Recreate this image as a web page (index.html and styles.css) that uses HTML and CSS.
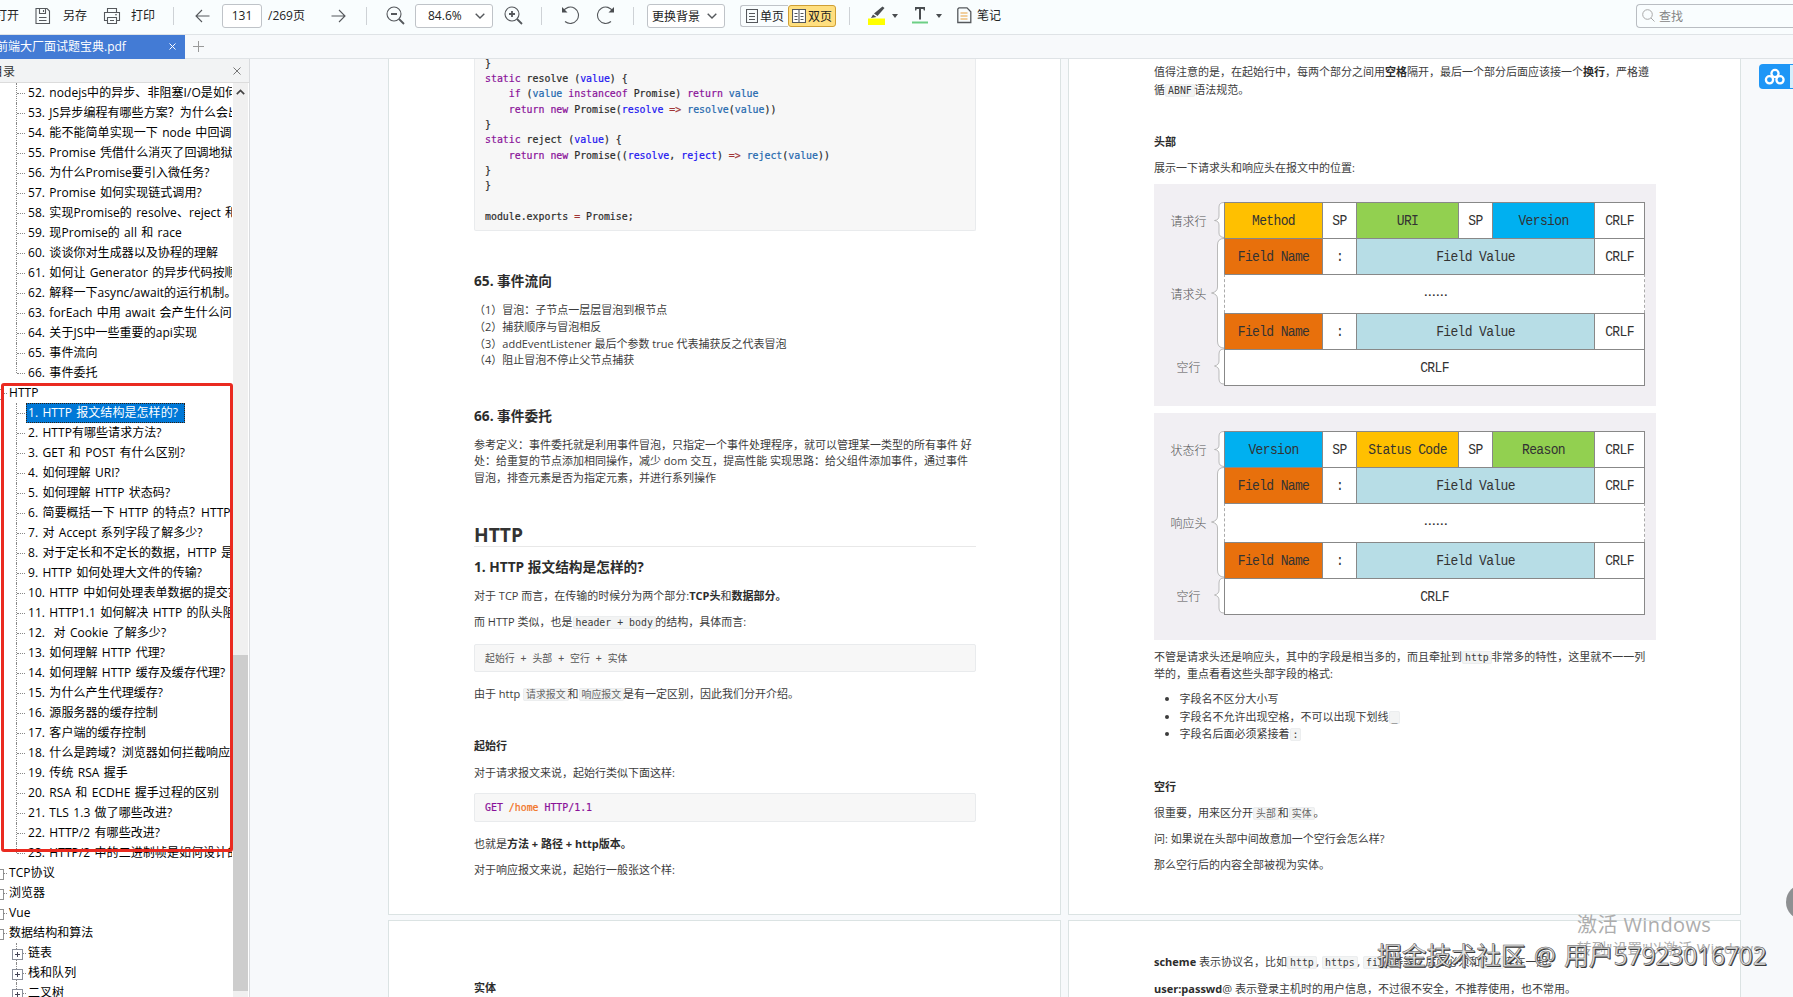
FILE: index.html
```html
<!DOCTYPE html>
<html lang="zh-CN">
<head>
<meta charset="utf-8">
<title>前端大厂面试题宝典.pdf</title>
<link rel="stylesheet" href="styles.css">
</head>
<body>
<div class="app">
  <header class="toolbar">
    <span class="tool t-open">打开</span>
    <svg class="ic i-save" width="16" height="18" viewBox="0 0 16 18"><path d="M1 1.5h11l2.5 2.5v12.500h-13.500zM4.500 1.500v5h6v-5M8.500 3v2M4 10.500h7.500M4 13.500h7.500"/></svg>
    <span class="tool t-saveas">另存</span>
    <svg class="ic i-print" width="18" height="18" viewBox="0 0 18 18"><path d="M4.500 5.500v-4h9v4M4.500 13.500h-3v-8h15v8h-3M4.500 10.500h9v6h-9zM7 13.500h4M12 7.800h2"/></svg>
    <span class="tool t-print">打印</span>
    <i class="sep s1"></i>
    <svg class="ic i-prev" width="15" height="14" viewBox="0 0 15 14"><path d="M14.500 7H1M7 1L1 7l6 6"/></svg>
    <span class="box pagebox">131</span>
    <span class="tool t-total">/269页</span>
    <svg class="ic i-next" width="15" height="14" viewBox="0 0 15 14"><path d="M.5 7H14M8 1l6 6-6 6"/></svg>
    <i class="sep s2"></i>
    <svg class="ic i-zout" width="19" height="19" viewBox="0 0 19 19"><circle cx="8" cy="8" r="7"/><path d="M5 8h6M13 13l5 5" stroke-width="1.800"/></svg>
    <span class="box zoombox">84.6%<svg class="ic" width="10" height="6" viewBox="0 0 10 6"><path d="M.7.7L5 5 9.300.7" stroke-width="1.400"/></svg></span>
    <svg class="ic i-zin" width="19" height="19" viewBox="0 0 19 19"><circle cx="8" cy="8" r="7"/><path d="M5 8h6M8 5v6M13 13l5 5" stroke-width="1.800"/></svg>
    <i class="sep s3"></i>
    <svg class="ic i-undo" width="19" height="19" viewBox="0 0 19 19"><path d="M2 5.500A8.200 8.200 0 1 1 4 15.500"/><path d="M1 1v5.500h5.500z" fill="#4a4d50" stroke="none"/></svg>
    <svg class="ic i-redo" width="19" height="19" viewBox="0 0 19 19"><path d="M17 5.500A8.200 8.200 0 1 0 15 15.500"/><path d="M18 1v5.500h-5.500z" fill="#4a4d50" stroke="none"/></svg>
    <i class="sep s4"></i>
    <span class="box bgbox">更换背景<svg class="ic" width="10" height="6" viewBox="0 0 10 6"><path d="M.7.7L5 5 9.300.7" stroke-width="1.400"/></svg></span>
    <span class="toggle">
      <span class="half"><svg class="ic" width="12" height="14" viewBox="0 0 12 14"><path d="M.5.500h11v13H.5zM3 4.500h6M3 7.500h6M3 10.500h6"/></svg>单页</span>
      <span class="half on"><svg class="ic" width="14" height="14" viewBox="0 0 14 14"><path fill="#fff" d="M.5.500h13v13H.5z"/><path d="M7 .5v13M2.500 4.500h3M2.500 7.500h3M2.500 10.500h3M8.500 4.500h3M8.500 7.500h3M8.500 10.500h3"/></svg>双页</span>
    </span>
    <i class="sep s5"></i>
    <svg class="i-mark" width="18" height="19" viewBox="0 0 18 19"><path d="M0 12.500h17V19H0z" fill="#ffff00"/><path d="M14.500.5l2 1.500-7 8-3.500-2.500zM5 8.500l3.500 2.500-5.500 1z" fill="#4a4d50"/></svg>
    <svg class="i-caret" width="6" height="4" viewBox="0 0 6 4"><path d="M0 0h6L3 4z" fill="#4a4d50"/></svg>
    <svg class="i-text" width="16" height="17" viewBox="0 0 16 17"><path d="M3 0h10v3.500h-1.200l-.5-1.500H9v10.500H7V2H4.700l-.5 1.500H3z" fill="#4a4d50"/><path d="M0 14.500h16v2H0z" fill="#6ccf85"/></svg>
    <svg class="i-caret" width="6" height="4" viewBox="0 0 6 4"><path d="M0 0h6L3 4z" fill="#4a4d50"/></svg>
    <svg class="ic i-note" width="15" height="17" viewBox="0 0 15 17"><path d="M2 .8h8l3.800 4V15.500H.8V2z" stroke-width="1.300"/><path d="M3.500 6h7M3.500 9h7M3.500 12h7" stroke="#e9a13c"/></svg>
    <span class="tool t-note">笔记</span>
    <span class="search"><svg width="13" height="13" viewBox="0 0 13 13"><circle cx="5.500" cy="5.500" r="4.800"/><path d="M9 9l3.500 3.500"/></svg>查找</span>
  </header>

  <div class="tabs">
    <div class="tab"><span>前端大厂面试题宝典.pdf</span><svg width="7" height="7" viewBox="0 0 7 7"><path d="M.5.500l6 6M6.500.500l-6 6"/></svg></div>
    <svg class="plus" width="11" height="11" viewBox="0 0 11 11"><path d="M5.500 0v11M0 5.500h11"/></svg>
  </div>

  <div class="body">
    <aside class="side">
      <div class="sidehead"><span>目录</span><svg width="8" height="8" viewBox="0 0 8 8"><path d="M.5.500l7 7M7.500.500l-7 7"/></svg></div>
      <div class="sidebody">
        <div class="tree">
          <div class="row"><span>52. nodejs中的异步、非阻塞I/O是如何实现的?</span></div>
          <div class="row"><span>53. JS异步编程有哪些方案？为什么会出现这些方案?</span></div>
          <div class="row"><span>54. 能不能简单实现一下 node 中回调函数的机制?</span></div>
          <div class="row"><span>55. Promise 凭借什么消灭了回调地狱?</span></div>
          <div class="row"><span>56. 为什么Promise要引入微任务?</span></div>
          <div class="row"><span>57. Promise 如何实现链式调用?</span></div>
          <div class="row"><span>58. 实现Promise的 resolve、reject 和 finally</span></div>
          <div class="row"><span>59. 现Promise的 all 和 race</span></div>
          <div class="row"><span>60. 谈谈你对生成器以及协程的理解</span></div>
          <div class="row"><span>61. 如何让 Generator 的异步代码按顺序执行完毕?</span></div>
          <div class="row"><span>62. 解释一下async/await的运行机制。</span></div>
          <div class="row"><span>63. forEach 中用 await 会产生什么问题?</span></div>
          <div class="row"><span>64. 关于JS中一些重要的api实现</span></div>
          <div class="row"><span>65. 事件流向</span></div>
          <div class="row last"><span>66. 事件委托</span></div>
          <div class="row top"><span>HTTP</span></div>
          <div class="row"><span class="sel">1. HTTP 报文结构是怎样的?</span></div>
          <div class="row"><span>2. HTTP有哪些请求方法?</span></div>
          <div class="row"><span>3. GET 和 POST 有什么区别?</span></div>
          <div class="row"><span>4. 如何理解 URI?</span></div>
          <div class="row"><span>5. 如何理解 HTTP 状态码?</span></div>
          <div class="row"><span>6. 简要概括一下 HTTP 的特点？HTTP 有哪些缺点?</span></div>
          <div class="row"><span>7. 对 Accept 系列字段了解多少?</span></div>
          <div class="row"><span>8. 对于定长和不定长的数据，HTTP 是怎么传输的?</span></div>
          <div class="row"><span>9. HTTP 如何处理大文件的传输?</span></div>
          <div class="row"><span>10. HTTP 中如何处理表单数据的提交?</span></div>
          <div class="row"><span>11. HTTP1.1 如何解决 HTTP 的队头阻塞问题?</span></div>
          <div class="row"><span>12.&nbsp; 对 Cookie 了解多少?</span></div>
          <div class="row"><span>13. 如何理解 HTTP 代理?</span></div>
          <div class="row"><span>14. 如何理解 HTTP 缓存及缓存代理?</span></div>
          <div class="row"><span>15. 为什么产生代理缓存?</span></div>
          <div class="row"><span>16. 源服务器的缓存控制</span></div>
          <div class="row"><span>17. 客户端的缓存控制</span></div>
          <div class="row"><span>18. 什么是跨域？浏览器如何拦截响应</span></div>
          <div class="row"><span>19. 传统 RSA 握手</span></div>
          <div class="row"><span>20. RSA 和 ECDHE 握手过程的区别</span></div>
          <div class="row"><span>21. TLS 1.3 做了哪些改进?</span></div>
          <div class="row"><span>22. HTTP/2 有哪些改进?</span></div>
          <div class="row last"><span>23. HTTP/2 中的二进制帧是如何设计的?</span></div>
          <div class="row top"><span>TCP协议</span></div>
          <div class="row top"><span>浏览器</span></div>
          <div class="row top"><span>Vue</span></div>
          <div class="row top"><span>数据结构和算法</span></div>
          <div class="row exp"><span>链表</span></div>
          <div class="row exp"><span>栈和队列</span></div>
          <div class="row exp"><span>二叉树</span></div>
        </div>
        <div class="scroll"><svg width="9" height="6" viewBox="0 0 9 6"><path d="M.8 5.200L4.500 1.500l3.700 3.700"/></svg><div class="thumb"></div></div>
        <div class="redbox"></div>
      </div>
    </aside>

    <main class="viewer">
      <div class="page first">
<pre class="code long">}
<b class="k">static</b> resolve (<b class="d">value</b>) {
    <b class="k">if</b> (<b class="v">value</b> <b class="k">instanceof</b> Promise) <b class="k">return</b> <b class="v">value</b>
    <b class="k">return</b> <b class="k">new</b> Promise(<b class="d">resolve</b> <b class="o">=&gt;</b> <b class="v">resolve</b>(<b class="v">value</b>))
}
<b class="k">static</b> reject (<b class="d">value</b>) {
    <b class="k">return</b> <b class="k">new</b> Promise((<b class="d">resolve</b>, <b class="d">reject</b>) <b class="o">=&gt;</b> <b class="v">reject</b>(<b class="v">value</b>))
}
}

module.exports <b class="o">=</b> Promise;</pre>
        <h3 class="g41">65. 事件流向</h3>
        <p class="g11">（1）冒泡：子节点一层层冒泡到根节点<br>（2）捕获顺序与冒泡相反<br>（3）addEventListener 最后个参数 true 代表捕获反之代表冒泡<br>（4）阻止冒泡不停止父节点捕获</p>
        <h3 class="g37">66. 事件委托</h3>
        <p class="g11">参考定义：事件委托就是利用事件冒泡，只指定一个事件处理程序，就可以管理某一类型的所有事件 好<br>处：给重复的节点添加相同操作，减少 dom 交互，提高性能 实现思路：给父组件添加事件，通过事件<br>冒泡，排查元素是否为指定元素，并进行系列操作</p>
        <h2>HTTP</h2>
        <h3 class="g10">1. HTTP 报文结构是怎样的?</h3>
        <p class="g11">对于 TCP 而言，在传输的时候分为两个部分:<strong>TCP头</strong>和<strong>数据部分。</strong></p>
        <p class="g9">而 HTTP 类似，也是<code>header + body</code>的结构，具体而言:</p>
        <pre class="code short g13 plain">起始行 + 头部 + 空行 + 实体</pre>
        <p class="g14">由于 http <code class="cjk">请求报文</code>和<code class="cjk">响应报文</code>是有一定区别，因此我们分开介绍。</p>
        <h4 class="g35">起始行</h4>
        <p class="g10">对于请求报文来说，起始行类似下面这样:</p>
        <pre class="code short g12"><b class="k">GET</b> <b class="u">/home</b> <b class="k">HTTP/1.1</b></pre>
        <p class="g14">也就是<strong>方法 + 路径 + http版本。</strong></p>
        <p class="g9">对于响应报文来说，起始行一般张这个样:</p>
      </div>

      <div class="page first">
        <p class="g5 wide">值得注意的是，在起始行中，每两个部分之间用<strong>空格</strong>隔开，最后一个部分后面应该接一个<strong>换行</strong>，严格遵<br>循<code>ABNF</code>语法规范。</p>
        <h4 class="g36">头部</h4>
        <p class="g9">展示一下请求头和响应头在报文中的位置:</p>
        <div class="figure">
          <div class="labels">
            <svg width="70" height="183" viewBox="0 0 70 183"><path d="M70 .5Q65 .5 65 5V14Q65 18 60.500 18.500Q65 19 65 23V31Q65 35 70 35.500M70 36.500Q63.500 36.500 63.500 43V85Q63.500 90 57.500 91Q63.500 92 63.500 97V139Q63.500 146 70 146M70 147Q65 147 65 152V159Q65 163 60.500 164Q65 165 65 169V177Q65 182 70 182"/></svg>
            <span class="l1">请求行</span><span class="l2">请求头</span><span class="l3">空行</span>
          </div>
          <div class="table">
            <div class="tr"><span class="yellow"><i>Method</i></span><span><i>SP</i></span><span class="green"><i>URI</i></span><span><i>SP</i></span><span class="blue"><i>Version</i></span><span><i>CRLF</i></span></div>
            <div class="tr field"><span class="orange"><i>Field Name</i></span><span><i>:</i></span><span class="pale"><i>Field Value</i></span><span><i>CRLF</i></span></div>
            <div class="dots">......</div>
            <div class="tr field"><span class="orange"><i>Field Name</i></span><span><i>:</i></span><span class="pale"><i>Field Value</i></span><span><i>CRLF</i></span></div>
            <div class="tr one"><span><i>CRLF</i></span></div>
          </div>
        </div>
        <div class="figure second">
          <div class="labels">
            <svg width="70" height="183" viewBox="0 0 70 183"><path d="M70 .5Q65 .5 65 5V14Q65 18 60.500 18.500Q65 19 65 23V31Q65 35 70 35.500M70 36.500Q63.500 36.500 63.500 43V85Q63.500 90 57.500 91Q63.500 92 63.500 97V139Q63.500 146 70 146M70 147Q65 147 65 152V159Q65 163 60.500 164Q65 165 65 169V177Q65 182 70 182"/></svg>
            <span class="l1">状态行</span><span class="l2">响应头</span><span class="l3">空行</span>
          </div>
          <div class="table">
            <div class="tr"><span class="blue"><i>Version</i></span><span><i>SP</i></span><span class="yellow"><i>Status Code</i></span><span><i>SP</i></span><span class="green"><i>Reason</i></span><span><i>CRLF</i></span></div>
            <div class="tr field"><span class="orange"><i>Field Name</i></span><span><i>:</i></span><span class="pale"><i>Field Value</i></span><span><i>CRLF</i></span></div>
            <div class="dots">......</div>
            <div class="tr field"><span class="orange"><i>Field Name</i></span><span><i>:</i></span><span class="pale"><i>Field Value</i></span><span><i>CRLF</i></span></div>
            <div class="tr one"><span><i>CRLF</i></span></div>
          </div>
        </div>
        <p class="g7 wide">不管是请求头还是响应头，其中的字段是相当多的，而且牵扯到<code>http</code>非常多的特性，这里就不一一列<br>举的，重点看看这些头部字段的格式:</p>
        <ul>
          <li>字段名不区分大小写</li>
          <li>字段名不允许出现空格，不可以出现下划线<code>_</code></li>
          <li>字段名后面必须紧接着<code>:</code></li>
        </ul>
        <h4 class="g36">空行</h4>
        <p class="g9">很重要，用来区分开<code class="cjk">头部</code>和<code class="cjk">实体</code>。</p>
        <p class="g9">问: 如果说在头部中间故意加一个空行会怎么样?</p>
        <p class="g10">那么空行后的内容全部被视为实体。</p>
      </div>

      <div class="page next">
        <h4 class="g59">实体</h4>
      </div>
      <div class="page next">
        <p class="g33"><strong>scheme</strong> 表示协议名，比如<code>http</code>, <code>https</code>, <code>file</code>等等。后面必须和<code>://</code>连在一起。</p>
        <p class="g10"><strong>user:passwd</strong>@ 表示登录主机时的用户信息，不过很不安全，不推荐使用，也不常用。</p>
      </div>
    </main>
  </div>

  <div class="cloud"><svg width="22" height="18" viewBox="0 0 22 18"><circle cx="11" cy="5.500" r="3.600"/><circle cx="5.500" cy="11.800" r="3.600"/><circle cx="16" cy="11.800" r="3.600"/></svg></div>
  <div class="ball"></div>
  <div class="activate"><div class="a1">激活 Windows</div><div class="a2">转到"设置"以激活 Windows。</div></div>
  <div class="credit">掘金技术社区 @ 用户<span>57923016702</span></div>
</div>
</body>
</html>
```

FILE: styles.css
```css
* { box-sizing: border-box; }
body { margin: 0; font-family: "Open Sans", "Noto Sans CJK SC", sans-serif; }
.app { position: relative; width: 1793px; height: 997px; overflow: hidden; background: #f7f9fb; display: flex; flex-direction: column; }

/* toolbar */
.toolbar { height: 35px; flex: none; display: flex; align-items: center; padding-bottom: 3px; background: #f9fdfe; border-bottom: 1px solid #dfe3e6; font-size: 12px; color: #222; white-space: nowrap; }
.toolbar > * { flex: none; }
.ic { fill: none; stroke: #55585c; stroke-width: 1.1; }
.sep { width: 1px; height: 18px; background: #ced2d6; }
.tool { line-height: 18px; width: 24px; }
.t-open { margin-left: -5px; }
.i-save { margin-left: 16px; }
.t-saveas { margin-left: 12px; }
.i-print { margin-left: 16px; }
.t-print { margin-left: 10px; }
.s1 { margin-left: 18px; }
.i-prev { margin-left: 21px; }
.box { height: 24px; border: 1px solid #bfc3c8; border-radius: 3px; background: #fff; display: flex; align-items: center; }
.pagebox { width: 40px; margin-left: 12px; justify-content: center; }
.t-total { margin-left: 6px; width: 40px; }
.i-next { margin-left: 23px; }
.s2 { margin-left: 20px; }
.i-zout { margin-left: 19px; }
.zoombox { width: 78px; margin-left: 10px; padding: 0 7px 0 12px; justify-content: space-between; }
.i-zin { margin-left: 11px; }
.s3 { margin-left: 18px; }
.i-undo { margin-left: 19px; }
.i-redo { margin-left: 16px; }
.s4 { margin-left: 18px; }
.bgbox { width: 78px; margin-left: 13px; padding: 0 7px 0 4px; justify-content: space-between; }
.toggle { margin-left: 15px; display: flex; width: 96px; height: 22px; }
.half { display: flex; align-items: center; gap: 2px; width: 48px; padding-left: 5px; border: 1px solid #bfc3c8; border-right: 0; border-radius: 3px 0 0 3px; }
.half.on { background: #ffdf7f; border: 1px solid #cf9f35; border-radius: 3px; padding-left: 3px; }
.s5 { margin-left: 13px; }
.i-mark { margin-left: 18px; }
.i-mark + .i-caret { margin-left: 6px; }
.i-text { margin-left: 14px; }
.i-text + .i-caret { margin-left: 8px; }
.i-note { margin-left: 15px; }
.t-note { margin-left: 5px; }
.search { margin-left: auto; width: 157px; height: 24px; border: 1px solid #b9bdc2; border-right: 0; border-radius: 4px 0 0 4px; display: flex; align-items: center; gap: 4px; padding-left: 5px; color: #858585; }
.search svg { fill: none; stroke: #a9a9a9; }

/* tab strip */
.tabs { height: 24px; flex: none; display: flex; align-items: center; background: #f7f9fb; border-bottom: 1px solid #dfe3e6; }
.tab { width: 185px; height: 24px; background: #437bd5; color: #fff; font-size: 12px; display: flex; align-items: center; justify-content: space-between; padding-right: 9px; }
.tab span { margin-left: -4px; white-space: nowrap; line-height: 22px; }
.tab svg { fill: none; stroke: #fff; }
.plus { margin-left: 8px; fill: none; stroke: #999; }

.body { flex: 1; min-height: 0; display: flex; }

/* outline panel */
.side { width: 250px; flex: none; border-right: 1px solid #d9dbde; background: #fff; display: flex; flex-direction: column; }
.sidehead { height: 24px; flex: none; background: #f2f3f4; border-bottom: 1px solid #dcdcdc; display: flex; align-items: center; justify-content: space-between; padding: 0 8px 0 0; font-size: 12px; color: #333; }
.sidehead span { margin-left: -9px; }
.sidehead svg { fill: none; stroke: #777; }
.sidebody { flex: 1; min-height: 0; display: flex; position: relative; }
.tree { width: 232px; overflow: hidden; }
.row { position: relative; height: 20px; line-height: 20px; font-size: 12px; padding-left: 28px; white-space: nowrap; color: #000; letter-spacing: .06px; word-spacing: 1.1px; }
.row::before { content: ""; position: absolute; left: 16px; top: 0; height: 20px; border-left: 1px dotted #888; }
.row::after { content: ""; position: absolute; left: 17px; top: 10px; width: 8px; border-top: 1px dotted #888; }
.row.last::before { height: 10px; }
.row.top { padding-left: 9px; }
.row.top::before { left: -7px; top: 6px; width: 9px; height: 9px; border: 1px solid #919191; }
.row.top::after { left: 3px; width: 4px; }
.row.exp::before { left: 12px; top: 6px; width: 9px; height: 9px; border: 1px solid #8a8f9a; background: linear-gradient(#445, #445) center / 5px 1px no-repeat, linear-gradient(#445, #445) center / 1px 5px no-repeat, #fff; z-index: 1; }
.row.exp::after { left: 16px; top: 0; width: 9px; height: 20px; border: 0; border-left: 1px dotted #888; background: repeating-linear-gradient(90deg, #888 0 1px, transparent 1px 2px) 0 10px / 9px 1px no-repeat; }
.sel { display: inline-block; height: 20px; line-height: 18px; margin-left: -2px; padding: 0 6px 0 1px; border: 1px dotted #302010; background: #0078d7; color: #fff; vertical-align: top; }
.scroll { margin-left: 1px; width: 15px; background: #f0f0f0; display: flex; flex-direction: column; align-items: center; }
.scroll svg { margin-top: 6px; fill: none; stroke: #444; stroke-width: 1.7; }
.thumb { margin-top: 560px; width: 15px; height: 336px; background: #cdcdcd; }
.redbox { position: absolute; left: 1px; top: 300px; width: 232px; height: 469px; border: 3px solid #ea2a20; border-radius: 3px; }

/* document */
.viewer { flex: 1; min-width: 0; padding-left: 138px; display: grid; grid-template-columns: 673px 673px; column-gap: 7px; row-gap: 5px; grid-template-rows: 856px 90px; overflow: hidden; background: #f7f9fb; }
.page { background: #fff; border: 1px solid #dbe3e3; padding: 0 84px 0 85px; color: #3c3c3c; overflow: hidden; display: flex; flex-direction: column; }
.page > * { flex: none; }
.page.first { border-top: 0; }
.page p, .page li, .page h4 { font-size: 11px; line-height: 16.6px; margin: 0; white-space: nowrap; }
.page p.wide, .page li { line-height: 17.5px; }
.page h4, strong { font-weight: 700; color: #2c2c2c; }
.page h3 { margin: 0; font-size: 13.700px; line-height: 20px; font-weight: 700; color: #2c2c2c; white-space: nowrap; }
.page h2 { margin: 37px 0 0; font-size: 19.200px; line-height: 23px; font-weight: 700; color: #333; border-bottom: 1px solid #e8e8e8; }
.page .g5 { margin-top: 4px; }
.page .g7 { margin-top: 7.500px; }
.page .g9 { margin-top: 9.300px; }
.page .g10 { margin-top: 10px; }
.page .g11 { margin-top: 11px; }
.page .g12 { margin-top: 12px; }
.page .g13 { margin-top: 13px; }
.page .g14 { margin-top: 14px; }
.page .g33 { margin-top: 33px; }
.page .g35 { margin-top: 35px; }
.page .g36 { margin-top: 36px; }
.page .g37 { margin-top: 36.700px; }
.page .g41 { margin-top: 40.700px; }
.page .g59 { margin-top: 59px; }

.code { margin: 0; background: #f7f7f7; border: 1px solid #e9ebed; border-radius: 2px; padding: 0 10px; font: 9.900px/15.340px "DejaVu Sans Mono", "Noto Sans CJK SC", monospace; color: #2b2b2b; -webkit-text-stroke: .2px currentColor; }
.code.long { border-top: 0; margin-top: -3.400px; padding-bottom: 5.400px; }
.code.short { height: 28.600px; line-height: 27.600px; }
.code.plain { color: #555; -webkit-text-stroke: 0; }
.code b { font-weight: 400; }
.code .k { color: #8a1299; }
.code .d { color: #1c14f0; }
.code .v { color: #1f68ae; }
.code .o { color: #a03434; }
.code .u { color: #f2711c; }
code { font: 9.900px/12px "DejaVu Sans Mono", "Noto Sans CJK SC", monospace; background: #f3f4f4; border: 1px solid #eceeef; border-radius: 2px; padding: 0 2px; margin-right: -.5px; }
code.cjk { color: #666; margin-right: -1px; }

.page ul { margin: 7.500px 0 0; padding: 0 0 0 25.500px; }

/* message layout diagrams */
.figure { margin-top: 8px; width: 502px; height: 222px; background: #f1eff3; padding-top: 18px; display: flex; align-items: flex-start; }
.figure.second { margin-top: 7px; height: 227px; }
.labels { position: relative; width: 70px; height: 183px; display: grid; grid-template-rows: 37px 109px 37px; justify-items: center; align-items: center; padding-right: 1px; font-size: 12px; font-weight: 300; color: #555; }
.labels svg { position: absolute; left: 0; top: 0; fill: #fff; stroke: #aaa; stroke-width: .8; }
.labels span { position: relative; }
.table { width: 421px; display: grid; grid-template-rows: 36px 36px 39px 36px 36px; font-family: "Liberation Mono", monospace; font-size: 13px; letter-spacing: -.65px; color: #333; }
.tr { display: grid; grid-template-columns: 98px 34px 102px 34px 102px 50px; background: #fff; border-left: 1px solid #888; border-top: 1px solid #888; width: 421px; }
.tr.field { grid-template-columns: 98px 34px 238px 50px; }
.tr.one { grid-template-columns: 420px; border-bottom: 1px solid #888; height: 37px; }
.tr span { display: flex; align-items: center; justify-content: center; border-right: 1px solid #888; }
.tr i { font-style: normal; transform: translateY(.7px) scaleY(1.13); }
.dots { background: #fff; border: 1px dashed #aaa; border-bottom: 0; border-top: 1px solid #888; width: 421px; text-align: center; line-height: 37px; font-weight: 700; font-size: 11px; letter-spacing: -2.600px; }
.yellow { background: #ffc000; }
.green { background: #92d050; }
.blue { background: #00b0f0; }
.orange { background: #e8700c; }
.pale { background: #b7dde6; }

/* floating items */
.cloud { position: absolute; left: 1759px; top: 64px; width: 34px; height: 25px; background: linear-gradient(90deg, #1e96f6 30px, #d5effc 30px); border: 1px solid #1e96f6; border-right: 0; border-radius: 4px 0 0 4px; padding: 3px 0 0 4px; }
.cloud svg { display: block; fill: none; stroke: #fff; stroke-width: 2.300; }
.ball { position: absolute; left: 1786px; top: 884px; width: 36px; height: 36px; border-radius: 50%; background: #8e9092; }
.activate { position: absolute; left: 1577px; top: 911px; color: #adadad; white-space: nowrap; font-weight: 400; }
.a1 { font-size: 20px; line-height: 28px; letter-spacing: .4px; }
.a2 { font-size: 14.500px; line-height: 20px; letter-spacing: .3px; }
.credit { position: absolute; left: 1377px; top: 938px; font-size: 24.700px; line-height: 36px; white-space: nowrap; word-spacing: 1.500px; letter-spacing: .1px; color: #e4e4e4; -webkit-text-stroke: .5px #555; text-shadow: 1px 1px 0 #333; }
.credit span { letter-spacing: -.2px; }
```
